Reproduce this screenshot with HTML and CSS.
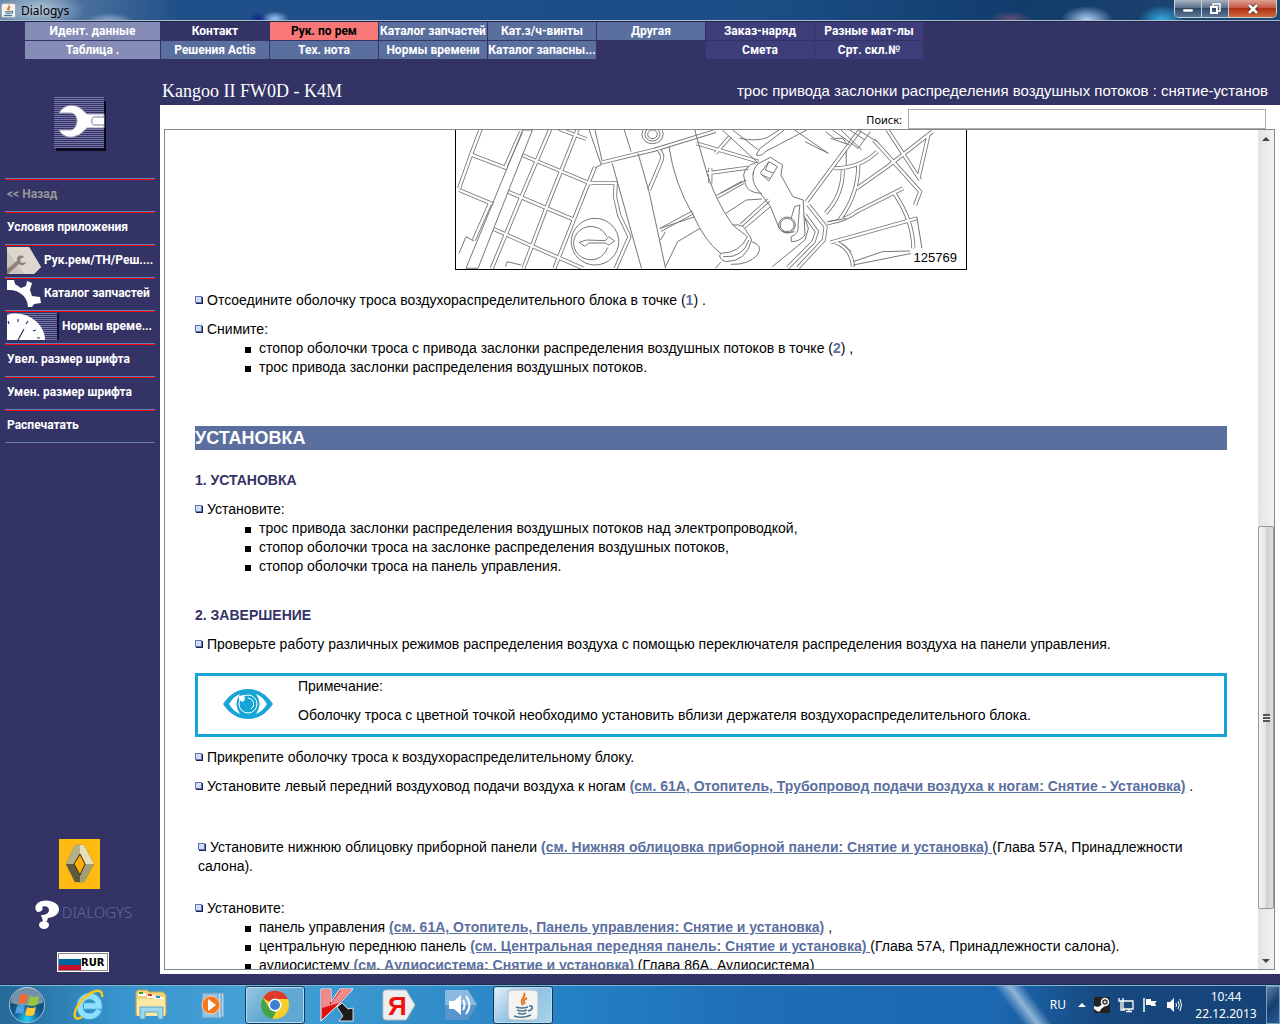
FILE: index.html
```html
<!DOCTYPE html>
<html lang="ru">

<head>
    <meta charset="UTF-8">
    <meta name="viewport" content="width=device-width, initial-scale=1.0">
    <title>Dialogys</title>
    <link rel="stylesheet" href="styles.css">
</head>

<body>
    <!-- window caption -->
    <header class="titlebar">
        <svg class="title-icon" viewBox="0 0 16 16">
            <rect x="0.5" y="0.5" width="15" height="15" rx="2" fill="#f4f4f2" stroke="#9aa5b0" />
            <path d="M8.5 2c1.500 2-3 3-1 6M10 4.500c-2 1-2 2-1 3.500" fill="none" stroke="#e8761b" stroke-width="1.300" />
            <path d="M4 9.500h7M5 11.500h5M3 13.500h9M11 9c2.500-.5 2 2-.5 2.500" fill="none" stroke="#4a7894" stroke-width="1.200" />
        </svg>
        <span class="title-text">Dialogys</span>
        <div class="win-btns">
            <button class="win-btn" aria-label="Свернуть"><svg viewBox="0 0 12 12"><rect x="1" y="6" width="10" height="3" fill="#fff" stroke="#455" stroke-width=".6" /></svg></button>
            <button class="win-btn" aria-label="Развернуть"><svg viewBox="0 0 12 12"><path d="M4 3V1h7v7H9" fill="none" stroke="#fff" stroke-width="1.500" /><rect x="2" y="4" width="6" height="6" fill="none" stroke="#fff" stroke-width="2" /></svg></button>
            <button class="win-btn close" aria-label="Закрыть"><svg viewBox="0 0 12 12"><path d="M2 2l8 8M10 2l-8 8" stroke="#422" stroke-width="4" /><path d="M2 2l8 8M10 2l-8 8" stroke="#fff" stroke-width="2.600" /></svg></button>
        </div>
    </header>

    <!-- tabs -->
    <nav class="tabs">
        <button class="tab ident">Идент. данные</button>
        <button class="tab plain">Контакт</button>
        <button class="tab active">Рук. по рем</button>
        <button class="tab">Каталог запчастей</button>
        <button class="tab">Кат.з/ч-винты</button>
        <button class="tab">Другая</button>
        <button class="tab extra">Заказ-наряд</button>
        <button class="tab extra">Разные мат-лы</button>
        <button class="tab ident">Таблица .</button>
        <button class="tab">Решения Actis</button>
        <button class="tab">Тех. нота</button>
        <button class="tab">Нормы времени</button>
        <button class="tab">Каталог запасны...</button>
        <span></span>
        <button class="tab extra">Смета</button>
        <button class="tab extra">Срт. скл.№</button>
    </nav>

    <div class="workspace">
        <aside class="sidebar">
            <svg class="tool-logo" viewBox="0 0 52 55">
                <defs>
                    <pattern id="stripes" width="4" height="2" patternUnits="userSpaceOnUse">
                        <rect width="4" height="1" fill="#7474a6" />
                    </pattern>
                </defs>
                <rect x="2" y="4" width="50" height="50" fill="#0a0a20" />
                <rect width="50" height="51" fill="#333366" />
                <rect width="50" height="51" fill="url(#stripes)" />
                <path d="M5 16C9 9 16 7 22 9c5 1 7 5 11 8h17v14H33c-4 3-6 7-11 8-7 3-14 0-17-6h11c4 0 6-3 7-9 0-5-3-8-7-8z" fill="#fff" stroke="#9595ad" />
                <path d="M50 20H40c-3 0-3 8 0 8h10" fill="#fff" stroke="#77779a" />
            </svg>
            <nav class="menu">
                <button class="menu-item" disabled>&lt;&lt; Назад</button>
                <button class="menu-item">Условия приложения</button>
                <button class="menu-item">
                    <svg width="34" height="27" viewBox="0 0 34 27">
                        <path d="M0 0h22l12 20-7 7H0z" fill="#cdc5bd" />
                        <path d="M22 0l12 20-7 7h-9L0 4V0z" fill="#ded7cf" />
                        <path d="M0 22l10-8c-1-5 4-7 7-4l-4 2 1 4 5-1c-1 4-5 4-7 2L1 27H0z" fill="#8d8379" />
                    </svg>
                    Рук.рем/ТН/Реш....
                </button>
                <button class="menu-item">
                    <svg width="34" height="27" viewBox="0 0 34 27">
                        <path d="M0 0h7l1 4 6 4 5-2 1-5 5 2-2 7 2 6 8 1 1 6-7 1-2 3h-4C21 17 12 9 0 10z" fill="#fff" />
                    </svg>
                    Каталог запчастей
                </button>
                <button class="menu-item">
                    <svg width="52" height="27" viewBox="0 0 52 27">
                        <rect width="51" height="27" fill="url(#stripes)" />
                        <rect x="50" width="2" height="27" fill="#111130" />
                        <path d="M0 2C18-4 38 10 38 27H0z" fill="#fff" />
                        <path d="M11 27l6-11M11 6v3M21 8l-2 3M29 17l-3 1M1 8l1 3M30 25h3" stroke="#333366" stroke-width="1.200" />
                    </svg>
                    Нормы време...
                </button>
                <button class="menu-item">Увел. размер шрифта</button>
                <button class="menu-item">Умен. размер шрифта</button>
                <button class="menu-item">Распечатать</button>
            </nav>
            <div class="brand">
                <svg class="renault" viewBox="0 0 41 50">
                    <defs>
                        <linearGradient id="metal" x1="0" y1="0" x2="1" y2="1">
                            <stop offset="0" stop-color="#f0eccf" />
                            <stop offset=".5" stop-color="#85805f" />
                            <stop offset="1" stop-color="#c9c39b" />
                        </linearGradient>
                    </defs>
                    <rect width="41" height="50" fill="#ffbb11" />
                    <path d="M16 6h9l10 19-10 18h-9L7 25z" fill="url(#metal)" stroke="#c89512" />
                    <path d="M16 6h5v9l-6 10H7z" fill="#b5b08a" />
                    <path d="M7 25h8l6 11v7h-5z" fill="#5e5943" />
                    <path d="M21 6h4l10 19h-9l-5-10z" fill="#e4dfb9" />
                    <path d="M35 25h-9l-5 11v7h4z" fill="#a39e7a" />
                    <path d="M21 15l5 10-5 11-6-11z" fill="#ffae08" stroke="#352d10" />
                </svg>
                <div class="product">
                    <svg width="26" height="29" viewBox="0 0 26 29">
                        <path d="M8 1c8-2 17 2 17 8 0 5-4 8-11 9l-1 3H9l-2-6c5 0 8-2 8-5s-4-5-7-3c2 3-1 5-4 5-4-1-4-9 4-11z" fill="#fff" />
                        <ellipse cx="10" cy="25" rx="5" ry="4" fill="#fff" />
                    </svg>
                    <span>DIALOGYS</span>
                </div>
                <button class="currency">
                    <svg width="22" height="16" viewBox="0 0 22 16">
                        <rect width="22" height="5" fill="#fff" />
                        <rect y="5" width="22" height="6" fill="#0066a1" />
                        <rect y="11" width="22" height="5" fill="#c8102e" />
                    </svg>RUR
                </button>
            </div>
        </aside>

        <main class="main">
            <div class="page-head">
                <h1>Kangoo II FW0D - K4M</h1>
                <p>трос привода заслонки распределения воздушных потоков : снятие-установ</p>
            </div>
            <div class="panel">
                <form class="search">
                    <label for="search">Поиск:</label>
                    <input type="text" id="search">
                </form>
                <div class="viewer">
                    <article class="doc">
                        <figure class="figure">
                            <svg viewBox="46 15 1482 417" preserveAspectRatio="none">
                                <defs>
                                    <!-- ribs are stroked twice: dark edge, white core -->
                                    <g id="ribs">
                                        <path d="M118 12L90 88 55 190M320 12L238 210 150 430M400 12L310 245 242 430M450 125L390 280 332 430" />
                                        <path d="M88 88L195 130M55 195L155 238M238 90L440 177M196 200L388 284M155 312L260 360 415 430M345 12L425 42" />
                                        <path d="M468 113L620 75 800 18M430 174H510L508 215 520 270 550 335 510 430M635 75Q652 90 640 115L607 195" />
                                        <path d="M745 55L925 110M775 145L895 128M805 215L880 172M842 35L800 85M785 130V175M640 315L735 262M875 300L955 225" />
                                        <path d="M1220 15L1065 230M1430 20L1300 125 1210 190M1420 25L1390 160M1260 45L1395 200 1380 240M1145 130Q1220 130 1270 80" />
                                        <path d="M1170 135Q1170 210 1120 265M1215 120Q1215 210 1160 285M1125 295Q1180 285 1210 260L1345 190M1135 352L1385 280M1320 205Q1375 290 1375 370" />
                                        <path d="M1150 352Q1195 370 1200 425M1070 240L1120 305 1115 345 1040 428M1060 270L1095 320 1085 350 1010 428" />
                                        <path d="M235 20L190 125M145 235L98 345M1300 15L1395 165" />
                                    </g>
                                </defs>
                                <use href="#ribs" class="rib-edge" />
                                <use href="#ribs" class="rib-core" />
                                <g class="shape">
                                    <path d="M240 15L75 430H110L268 15zM75 335L55 385M75 335L98 348M190 425L195 410 235 420" />
                                    <path d="M433 15L468 120 450 128M450 15L470 105M535 15L555 80M575 85L607 200 655 430M585 430L500 115M640 310L740 275M655 425L690 350 755 310M655 320L640 345" />
                                    <path d="M665 65Q680 175 735 270 770 350 815 385 870 385 893 335L850 300Q790 215 760 90L740 15" />
                                    <path d="M815 385Q805 400 830 410 890 410 905 345 900 330 893 325M850 300Q885 295 893 325M905 350Q940 360 922 390 895 420 845 418M815 412L800 430M822 395Q880 400 897 345" />
                                    <path d="M820 15L920 110M850 15L925 75M870 40Q920 50 950 38L985 15M918 90L930 70 1000 15M918 90Q935 95 945 80L1065 15M1030 15L1128 85 1060 50" />
                                    <path d="M1140 15L1215 70 1250 20M1165 15L1225 75M1190 15L1235 45M1135 40L1190 60M1120 20L1145 40H1170L1180 55M1215 15L1270 50M1180 75V120" />
                                    <path d="M925 110Q870 125 885 170 890 205 935 205M935 110L960 97 995 120 990 150 1025 215 1055 225 1060 330Q1045 350 1020 350V335Q1045 325 1040 300L1045 240 1030 245 1020 280M910 140Q905 170 920 190L960 245 985 310Q1000 330 1030 320M935 110Q910 120 910 150" />
                                    <path d="M930 145L955 110 980 125 955 168zM955 110L945 135 970 145M935 150L958 160M815 205L890 165M830 265L890 225 935 222M885 310L960 245" />
                                    <path d="M965 425L1060 345 1070 310 1060 280M1130 290L1180 280M1385 275L1400 370M1165 355L1195 380M1200 420L1370 385M1200 410L1285 380 1365 378" />
                                    <ellipse cx="617" cy="28" rx="31" ry="28" /><ellipse cx="617" cy="28" rx="22" ry="20" /><ellipse cx="617" cy="28" rx="14" ry="13" />
                                    <ellipse cx="1008" cy="300" rx="24" ry="24" /><ellipse cx="1008" cy="300" rx="20" ry="20" />
                                    <ellipse cx="450" cy="350" rx="69" ry="70" /><path d="M484 335A50 50 0 1 0 486 368" />
                                    <path d="M404 352L425 345 480 347 490 335 507 348 490 360 480 354H432L420 364z" />
                                </g>
                            </svg>
                            <figcaption>125769</figcaption>
                        </figure>

                        <p class="step"><i class="mark"></i>Отсоедините оболочку троса воздухораспределительного блока в точке (<b>1</b>) .</p>
                        <p class="step"><i class="mark"></i>Снимите:</p>
                        <ul>
                            <li>стопор оболочки троса с привода заслонки распределения воздушных потоков в точке (<b>2</b>) ,</li>
                            <li>трос привода заслонки распределения воздушных потоков.</li>
                        </ul>

                        <h2>УСТАНОВКА</h2>

                        <h3>1. УСТАНОВКА</h3>
                        <p class="step"><i class="mark"></i>Установите:</p>
                        <ul>
                            <li>трос привода заслонки распределения воздушных потоков над электропроводкой,</li>
                            <li>стопор оболочки троса на заслонке распределения воздушных потоков,</li>
                            <li>стопор оболочки троса на панель управления.</li>
                        </ul>

                        <h3 class="next">2. ЗАВЕРШЕНИЕ</h3>
                        <p class="step"><i class="mark"></i>Проверьте работу различных режимов распределения воздуха с помощью переключателя распределения воздуха на панели управления.</p>

                        <div class="note">
                            <svg width="50" height="30" viewBox="0 0 50 30">
                                <path d="M0 15Q10 0 25 0T50 15Q40 30 25 30T0 15z" fill="#17a5d5" />
                                <path d="M6 15Q11 7 17 5 10 15 17 25 10 22 6 15zM44 15Q39 7 33 5 40 15 33 25 40 22 44 15z" fill="#fff" />
                                <circle cx="25" cy="15" r="9" fill="none" stroke="#fff" />
                                <path d="M16 7l5-1 1 4-2 3-4-2z" fill="#fff" />
                                <path d="M25 9a6 6 0 0 1 3 11" fill="none" stroke="#fff" />
                            </svg>
                            <div>
                                <p>Примечание:</p>
                                <p>Оболочку троса с цветной точкой необходимо установить вблизи держателя воздухораспределительного блока.</p>
                            </div>
                        </div>

                        <p class="step"><i class="mark"></i>Прикрепите оболочку троса к воздухораспределительному блоку.</p>
                        <p class="step"><i class="mark"></i>Установите левый передний воздуховод подачи воздуха к ногам <a href="#">(см. 61A, Отопитель, Трубопровод подачи воздуха к ногам: Снятие - Установка)</a> .</p>

                        <p class="loose"><i class="mark"></i>Установите нижнюю облицовку приборной панели <a href="#">(см. Нижняя облицовка приборной панели: Снятие и установка) </a>(Глава 57A, Принадлежности салона).</p>

                        <p class="step"><i class="mark"></i>Установите:</p>
                        <ul>
                            <li>панель управления <a href="#">(см. 61A, Отопитель, Панель управления: Снятие и установка)</a> ,</li>
                            <li>центральную переднюю панель <a href="#">(см. Центральная передняя панель: Снятие и установка) </a>(Глава 57A, Принадлежности салона).</li>
                            <li>аудиосистему <a href="#">(см. Аудиосистема: Снятие и установка) </a>(Глава 86A, Аудиосистема)</li>
                        </ul>
                    </article>
                    <div class="scrollbar">
                        <button aria-label="Вверх"><svg width="8" height="4" viewBox="0 0 8 4"><path d="M0 4l4-4 4 4z" fill="#444" /></svg></button>
                        <div class="before"></div>
                        <div class="thumb"><span></span></div>
                        <div class="after"></div>
                        <button aria-label="Вниз"><svg width="8" height="4" viewBox="0 0 8 4"><path d="M0 0l4 4 4-4z" fill="#444" /></svg></button>
                    </div>
                </div>
            </div>
        </main>
    </div>

    <footer class="taskbar">
        <button class="start" aria-label="Пуск">
            <svg width="38" height="38" viewBox="0 0 38 38">
                <defs>
                    <radialGradient id="orb" cx=".5" cy=".9" r=".8">
                        <stop offset="0" stop-color="#1fd4ff" />
                        <stop offset=".4" stop-color="#14659a" />
                        <stop offset="1" stop-color="#133a5c" />
                    </radialGradient>
                </defs>
                <circle cx="19" cy="19" r="17.500" fill="url(#orb)" stroke="#a9c4d4" />
                <path d="M3 17a16 16 0 0 1 32 0Q19 22 3 17z" fill="#c3d6e2" opacity=".55" />
                <path d="M12 9q4-2 8 0l-2 9q-4-2-8 0z" fill="#ee6a33" />
                <path d="M22 10q4 2 9 0l-2 9q-5 2-9 0z" fill="#9ac63b" />
                <path d="M9 20q4-2 8 0l-2 8q-4-2-8 0z" fill="#4fa3e0" />
                <path d="M19 21q4 2 9 0l-2 8q-5 2-9 0z" fill="#fbc633" />
            </svg>
        </button>
        <button class="task" aria-label="Internet Explorer">
            <svg width="34" height="34" viewBox="0 0 34 34">
                <path d="M27 22C23 31 8 31 8 18S27 5 27 18H12" fill="none" stroke="#3a9fd6" stroke-width="8" />
                <path d="M27 22C23 31 8 31 8 18S27 5 27 18H12" fill="none" stroke="#8fe0ff" stroke-width="5.500" />
                <path d="M30 9C32-3 15 4 7 16 0 26 2 34 10 29" fill="none" stroke="#f6c61c" stroke-width="2.500" />
            </svg>
        </button>
        <button class="task" aria-label="Проводник">
            <svg width="34" height="34" viewBox="0 0 34 34">
                <path d="M2 4l2-2h9l2 2h14l3 3v20H2z" fill="#efd27b" stroke="#c7a347" />
                <path d="M4 5h8v3H4zM13 7h8v3h-8zM21 9h9v3h-9z" fill="#fff" />
                <path d="M5 4h4v2H5z" fill="#2a9a35" /><path d="M14 6h4v2h-4z" fill="#d53d20" /><path d="M22 8h4v2h-4z" fill="#2384cc" />
                <path d="M3 11h28v17H3z" fill="#fbe9a6" />
                <path d="M6 31V19h23v12h-5v-7H11v7z" fill="#9fd8ee" stroke="#5aa4cc" />
            </svg>
        </button>
        <button class="task" aria-label="Проигрыватель">
            <svg width="34" height="34" viewBox="0 0 34 34">
                <path d="M14 5h14v24H14z" fill="#a8d0ea" stroke="#5e9bc9" /><path d="M10 5h15v25H10z" fill="#c3e0f2" stroke="#5e9bc9" /><path d="M6 5h16v25H6z" fill="#8cc3e5" stroke="#5e9bc9" />
                <circle cx="15" cy="17" r="9" fill="#f27a1e" stroke="#fbd1ae" />
                <path d="M12 11l8 6-8 6z" fill="#fff" />
            </svg>
        </button>
        <button class="task open" aria-label="Chrome">
            <svg width="30" height="30" viewBox="0 0 30 30">
                <circle cx="15" cy="15" r="14" fill="#f6cf2c" />
                <path d="M15 15L3 8A14 14 0 0 1 28 9H15z" fill="#dc3b2b" />
                <path d="M3 8l7 11 6 3-4 7A14 14 0 0 1 3 8z" fill="#3fa44a" />
                <circle cx="15" cy="15" r="6.500" fill="#fff" /><circle cx="15" cy="15" r="5" fill="#3a7fd0" />
            </svg>
        </button>
        <button class="task" aria-label="Kaspersky">
            <svg width="34" height="34" viewBox="0 0 34 34">
                <path d="M1 1h10v13L20 1h13L18 17 1 33z" fill="#e01010" stroke="#fff" />
                <path d="M2 2h8v15L21 2h10L19 15 2 20z" fill="#ef8b8b" />
                <path d="M17 19l5-4 6 6 5-1v13H19l4-5z" fill="#1a1a1a" stroke="#ddd" />
            </svg>
        </button>
        <button class="task" aria-label="Яндекс">
            <svg width="34" height="34" viewBox="0 0 34 34">
                <path d="M4 2h20l9 15-9 15H4q-3 0-3-3V5q0-3 3-3z" fill="#eeeeee" stroke="#b5bdc4" />
                <text x="6" y="27" class="ya">Я</text>
            </svg>
        </button>
        <button class="task" aria-label="Звук">
            <svg width="34" height="34" viewBox="0 0 34 34">
                <path d="M1 2h23l9 15-9 15H1z" fill="#5795cd" /><path d="M1 2h23l9 15H1z" fill="#8cb9e2" />
                <path d="M5 13h5l7-6v20l-7-6H5z" fill="#fff" />
                <path d="M19 12q3 5 0 10M22 8q7 9 0 18" fill="none" stroke="#fff" stroke-width="2" />
            </svg>
        </button>
        <button class="task open current" aria-label="Dialogys">
            <svg width="32" height="32" viewBox="0 0 32 32">
                <rect x="1" y="1" width="30" height="30" rx="4" fill="#f3f3f1" stroke="#b3bac1" />
                <path d="M17 4c3 4-6 6-1 12M20 9c-4 2-4 3-2 6" fill="none" stroke="#e8761b" stroke-width="2" />
                <path d="M9 18q6 2 12 0M10 21q5 2 10 0M11 24q4 2 8 0M7 27q8 3 17-1M22 17c5-1 4 4-1 5" fill="none" stroke="#4a7894" stroke-width="1.600" />
            </svg>
        </button>

        <div class="tray">
            <span class="lang">RU</span>
            <svg width="8" height="16" viewBox="0 0 8 16"><path d="M0 10l4-4 4 4z" fill="#fff" /></svg>
            <svg width="16" height="16" viewBox="0 0 16 16">
                <rect width="16" height="16" rx="1" fill="#222" />
                <circle cx="11" cy="5" r="3.500" fill="none" stroke="#fff" stroke-width="1.500" /><circle cx="11" cy="5" r="1.500" fill="#ccc" />
                <path d="M0 9l4 1 5-3 2 2-4 3q-1 4-4 2L0 12z" fill="#fff" />
            </svg>
            <svg width="16" height="16" viewBox="0 0 16 16">
                <path d="M5 4h10v8H5zM8 14.500h6M11 12v3" fill="#1d4777" stroke="#fff" stroke-width="1.300" />
                <path d="M1 1v3h4V1M3 4v9h4" fill="none" stroke="#fff" stroke-width="1.300" />
            </svg>
            <svg width="16" height="16" viewBox="0 0 16 16">
                <path d="M2 1v14" stroke="#fff" stroke-width="1.500" /><path d="M4 2h5v2h6l-2 2 1 3H9V8H4z" fill="#fff" />
            </svg>
            <svg width="16" height="16" viewBox="0 0 16 16">
                <path d="M1 5h3l4-4v14l-4-4H1z" fill="#fff" /><path d="M10 6q1 2 0 4M12 4q2.500 4 0 8M14 2q3 6 0 12" fill="none" stroke="#fff" />
            </svg>
            <div class="clock">10:44<br>22.12.2013</div>
            <button class="desktop" aria-label="Свернуть все окна"></button>
        </div>
    </footer>
</body>

</html>
```
FILE: styles.css
```css
* {
    margin: 0;
    padding: 0;
    box-sizing: border-box;
}

body {
    height: 100vh;
    display: flex;
    flex-direction: column;
    overflow: hidden;
    background: #333366;
    font-family: "Liberation Sans", Arial, sans-serif;
    font-size: 14px;
}

button {
    border: none;
    background: none;
    font: inherit;
    color: inherit;
}

svg {
    display: block;
    flex: none;
}

ul {
    list-style: none;
}

/* window caption */

.titlebar {
    height: 22px;
    display: flex;
    align-items: flex-start;
    padding: 0 3px 0 1px;
    border-bottom: 1px solid #20264a;
    box-shadow: inset 0 -1px #a9bccd;
    background:
        radial-gradient(ellipse 45px 18px at 40px 10px, rgba(205, 218, 230, 0.8), transparent),
        radial-gradient(ellipse 24px 9px at 110px 22px, rgba(205, 220, 235, 0.7), transparent),
        radial-gradient(ellipse 9px 7px at 258px 19px, #17258c, transparent),
        radial-gradient(ellipse 14px 8px at 275px 19px, #9ec5f3, transparent),
        radial-gradient(ellipse 22px 9px at 1011px 20px, #6c4f78, transparent),
        radial-gradient(ellipse 26px 14px at 1087px 20px, #b5d4f7, transparent),
        radial-gradient(ellipse 24px 16px at 1162px 21px, #35b3e8, transparent),
        linear-gradient(to right, #6c8cad, #20508a 14%, #1a4e85 60%, #123c6c 80%, #23466f);
    font-family: "Noto Sans", sans-serif;
    font-size: 12px;
}

.title-icon {
    width: 15px;
    height: 15px;
    margin-top: 3px;
}

.title-text {
    margin-left: 5px;
    line-height: 21px;
}

.win-btns {
    display: flex;
    margin-left: auto;
    height: 18px;
    border: 1px solid #c6d2de;
    border-top: none;
    border-radius: 0 0 5px 5px;
    overflow: hidden;
}

.win-btn {
    width: 27px;
    display: flex;
    align-items: center;
    justify-content: center;
    background: linear-gradient(#a6b3c2, #5a708b 45%, #30496b 50%, #5c7896);
    border-right: 1px solid #c6d2de;
}

.win-btn svg {
    width: 12px;
    height: 12px;
}

.win-btn.close {
    width: 47px;
    border: none;
    background: linear-gradient(#dda093, #c75b48 45%, #b02f14 50%, #cf6a3c);
}

/* tabs */

.tabs {
    display: grid;
    grid-template-columns: 135px repeat(7, 108px);
    grid-auto-rows: 18px;
    gap: 1px;
    padding-left: 25px;
}

.tab {
    background: #5b6f9f;
    color: #fff;
    font-family: Roboto, sans-serif;
    font-size: 12px;
    font-weight: bold;
    line-height: 18px;
    white-space: nowrap;
}

.tab.ident {
    background: #858cb6;
}

.tab.plain {
    background: #333366;
}

.tab.active {
    background: #f87777;
    color: #000;
}

.tab.extra {
    background: #3d3d7a;
}

.workspace {
    flex: 1;
    min-height: 0;
    display: grid;
    grid-template-columns: 160px 1fr;
    grid-template-rows: minmax(0, 1fr);
    padding-bottom: 10px;
}

/* sidebar */

.sidebar {
    display: flex;
    flex-direction: column;
    padding: 38px 5px 2px;
}

.tool-logo {
    width: 52px;
    height: 55px;
    margin: 0 auto 26px;
}

.menu {
    border-bottom: 1px solid #5f7fb8;
}

.menu-item {
    width: 100%;
    height: 33px;
    display: flex;
    align-items: center;
    gap: 3px;
    padding: 0 3px 2px 2px;
    border-top: 1px solid #5f7fb8;
    box-shadow: inset 0 1px #ff0000;
    color: #fff;
    font-family: Roboto, sans-serif;
    font-size: 12px;
    font-weight: bold;
    white-space: nowrap;
}

.menu-item:disabled {
    color: #969696;
}

.brand {
    margin-top: auto;
    padding-left: 6px;
    display: flex;
    flex-direction: column;
    align-items: center;
}

.renault {
    width: 41px;
    height: 50px;
    margin-right: 7px;
}

.product {
    display: flex;
    align-items: center;
    gap: 2px;
    margin: 11px 0 23px;
    color: #66669c;
    font-family: "Noto Sans", sans-serif;
    font-weight: 300;
    font-size: 15px;
    line-height: 24px;
}

.product span {
    padding-bottom: 5px;
}

.currency {
    display: flex;
    align-items: center;
    width: 52px;
    height: 20px;
    background: #fff;
    border: 1px solid #fff;
    box-shadow: inset 0 0 0 1px #888;
    padding-left: 1px;
    font-family: "DejaVu Sans", sans-serif;
    font-size: 10px;
    font-weight: bold;
    color: #000;
}

/* document panel */

.main {
    display: flex;
    flex-direction: column;
    min-width: 0;
}

.page-head {
    height: 46px;
    display: flex;
    align-items: flex-end;
    justify-content: space-between;
    padding: 0 12px 4px 2px;
    color: #fff;
    white-space: nowrap;
}

.page-head h1 {
    font-family: "Liberation Serif", serif;
    font-size: 18px;
    font-weight: normal;
    line-height: 20px;
}

.page-head p {
    font-size: 15px;
    line-height: 20px;
}

.panel {
    flex: 1;
    min-height: 0;
    display: flex;
    flex-direction: column;
    background: #fff;
    padding: 4px 5px 4px 4px;
}

.search {
    display: flex;
    justify-content: flex-end;
    align-items: center;
    gap: 6px;
    height: 20px;
    padding-right: 9px;
    font-family: "Noto Sans", sans-serif;
    font-size: 11px;
}

.search input {
    width: 358px;
    height: 20px;
    border: 1px solid #abadb3;
    padding: 0 4px;
}

.viewer {
    flex: 1;
    min-height: 0;
    display: flex;
    border: 1px solid #828790;
}

.doc {
    flex: 1;
    min-width: 0;
    overflow: hidden;
    padding: 0 31px 0 30px;
    line-height: 19px;
}

.figure {
    position: relative;
    width: 512px;
    height: 140px;
    margin: 0 auto 21px;
    border: 1px solid #000;
    border-top: none;
}

.figure svg {
    width: 100%;
    height: 100%;
}

.figure figcaption {
    position: absolute;
    right: 6px;
    bottom: 2px;
    padding: 0 3px;
    background: #fff;
    font-size: 13px;
    line-height: 18px;
}

.shape,
.rib-edge,
.rib-core {
    fill: none;
    stroke: #777;
}

.shape path,
.shape ellipse {
    vector-effect: non-scaling-stroke;
}

.rib-edge {
    stroke-width: 12px;
}

.rib-core {
    stroke: #fff;
    stroke-width: 7px;
}

.step {
    margin-top: 10px;
}

.mark {
    display: inline-block;
    width: 7px;
    height: 7px;
    margin-right: 5px;
    vertical-align: 2px;
    background: #d4dcf5;
    border: 1px solid #5f74b0;
    box-shadow: 1px 1px #1a2450;
}

.doc b,
.doc a {
    color: #5b6f9f;
    font-weight: bold;
}

.doc li {
    display: flow-root;
    padding-left: 64px;
}

.doc li::before {
    content: "";
    float: left;
    width: 6px;
    height: 6px;
    margin: 8px 0 0 -14px;
    background: #000;
}

.doc h2 {
    margin-top: 49px;
    background: #5b6f9f;
    color: #fff;
    font-size: 18px;
    line-height: 24px;
}

.doc h3 {
    margin-top: 21px;
    color: #333366;
    font-size: 14px;
}

.doc h3.next {
    margin-top: 30px;
}

.note {
    display: flex;
    align-items: center;
    gap: 25px;
    margin: 19px 0 11px;
    padding: 1px 25px 9px;
    border: 3px solid #17a5d5;
}

.note svg {
    margin-top: 6px;
}

.note p + p {
    margin-top: 10px;
}

.loose {
    margin: 42px 0 23px;
    padding: 0 3px;
}

/* scrollbar */

.scrollbar {
    width: 16px;
    display: flex;
    flex-direction: column;
    background: linear-gradient(to right, #e3e3e3, #f2f2f2);
}

.scrollbar button {
    height: 17px;
    display: flex;
    align-items: center;
    justify-content: center;
}

.before {
    flex: 380;
}

.thumb {
    flex: 382;
    display: flex;
    align-items: center;
    justify-content: center;
    border: 1px solid #979797;
    border-radius: 2px;
    background: linear-gradient(to right, #f5f5f5, #e6e6e8 45%, #cfcfd2 50%, #dedee0);
}

.thumb span {
    width: 7px;
    height: 8px;
    background: repeating-linear-gradient(#555 0 2px, #eee 2px 3px);
}

.after {
    flex: 43;
}

/* taskbar */

.taskbar {
    height: 40px;
    display: flex;
    align-items: center;
    border-top: 1px solid #1c2c4c;
    box-shadow: inset 0 1px #7fb6d9;
    background: linear-gradient(to right, #256a98, #3793cb 9%, #45a2d8 20%, #3490cb 32%, #2480c4 45%, #1e6db5 60%, #1c68b0 78%, #17487f 86%, #154377);
}

.start {
    width: 54px;
    display: flex;
    justify-content: center;
    margin-right: 5px;
}

.task {
    width: 60px;
    height: 38px;
    margin-right: 2px;
    display: flex;
    align-items: center;
    justify-content: center;
}

.task.open {
    border: 1px solid #123a5a;
    border-radius: 3px;
    box-shadow: inset 0 0 0 1px #b4dcf0;
    background: linear-gradient(135deg, #96c8e3, #62a9d1 50%, #5ea8d3);
}

.task.current {
    background: linear-gradient(135deg, #e3f0f8, #8fc1e2 50%, #a9d4ec);
}

.ya {
    fill: #e11;
    font-family: "Liberation Sans", sans-serif;
    font-size: 26px;
    font-weight: bold;
}

.tray {
    height: 100%;
    flex: 1;
    display: flex;
    align-items: center;
    justify-content: flex-end;
    gap: 8px;
    color: #fff;
    font-family: "Noto Sans", sans-serif;
    font-size: 12px;
    line-height: 17px;
    background: linear-gradient(53deg, transparent 62%, #8fb3d6 64%, transparent 66%) no-repeat;
}

.lang {
    margin-right: 4px;
}

.clock {
    width: 72px;
    text-align: center;
}

.desktop {
    width: 14px;
    height: 38px;
    margin-left: -4px;
    border: 1px solid #7d9dbf;
    background: linear-gradient(135deg, #5c7ea5, #17406f 50%, #255c97);
}
```
